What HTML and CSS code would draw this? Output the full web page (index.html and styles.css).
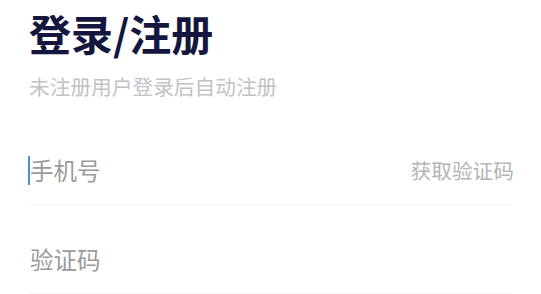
FILE: index.html
```html
<!DOCTYPE html>
<html lang="zh-CN">
<head>
<meta charset="utf-8">
<title>登录/注册</title>
<link rel="stylesheet" href="styles.css">
</head>
<body>
<main class="page">
  <h1 class="title">登录/注册</h1>
  <p class="subtitle">未注册用户登录后自动注册</p>
  <form class="form">
    <div class="field">
      <span class="caret"></span>
      <span class="placeholder">手机号</span>
      <span class="get-code">获取验证码</span>
    </div>
    <div class="field">
      <span class="placeholder">验证码</span>
    </div>
  </form>
</main>
</body>
</html>
```
FILE: styles.css
```css
html, body {
  margin: 0;
  padding: 0;
  background: #ffffff;
}

body {
  font-family: "Noto Sans CJK SC", "Noto Sans", sans-serif;
}

.page {
  padding: 8px 29px 0 29px;
}

.title {
  margin: 0;
  font-size: 42px;
  line-height: 50px;
  font-weight: 700;
  color: #15163d;
}

.subtitle {
  margin: 14px 0 0 0;
  font-size: 20.7px;
  line-height: 28px;
  color: #c2c2c8;
}

.form {
  margin: 38px 0 0 0;
  display: flex;
  flex-direction: column;
  gap: 22px;
}

.field {
  height: 64px;
  padding-bottom: 2px;
  display: flex;
  align-items: center;
  border-bottom: 1px solid #f3f3f3;
  margin-left: 1px;
}

.caret {
  width: 2px;
  height: 29px;
  background: #4a8fe6;
  margin-left: -2px;
  margin-right: 0;
}

.placeholder {
  font-size: 23.5px;
  line-height: 32px;
  color: #9a9a9a;
}

.get-code {
  margin-left: auto;
  margin-right: -2px;
  font-size: 20.7px;
  line-height: 28px;
  color: #b4b4b4;
}
```
